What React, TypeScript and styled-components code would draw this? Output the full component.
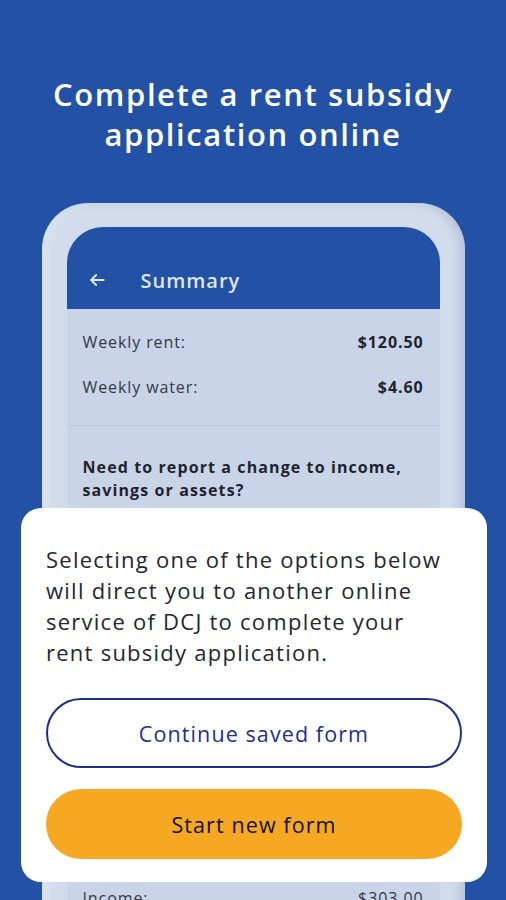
import { createGlobalStyle } from 'styled-components';
import styled from 'styled-components';

const GlobalStyle = createGlobalStyle`
  html, body {
    margin: 0;
    padding: 0;
    background: #2251a5;
  }
  body {
    font-family: 'Open Sans', 'Liberation Sans', sans-serif;
  }
`;

const Page = styled.div`
  position: relative;
  width: 506px;
  height: 900px;
  overflow: hidden;
  background: #2251a5;
  display: flex;
  flex-direction: column;
  align-items: center;
`;

const Heading = styled.h1`
  margin: 74px 0 0;
  color: #ffffff;
  font-size: 31px;
  font-weight: 600;
  line-height: 40px;
  text-align: center;
  letter-spacing: 1.6px;
  white-space: nowrap;
`;

const PhoneFrame = styled.div`
  margin-top: 49px;
  width: 423px;
  flex: 1;
  box-sizing: border-box;
  padding: 24px 25px 0;
  border-radius: 46px 46px 0 0;
  background: #d2dcec;
  box-shadow: inset -6px 0 8px rgba(150, 166, 196, 0.45), inset 6px 0 8px rgba(255, 255, 255, 0.25);
  display: flex;
  flex-direction: column;
`;

const Screen = styled.div`
  flex: 1;
  border-radius: 36px 36px 0 0;
  overflow: hidden;
  background: #c9d4e9;
  display: flex;
  flex-direction: column;
`;

const AppBar = styled.div`
  height: 82px;
  background: #2251a5;
  display: flex;
  align-items: center;
  padding: 24px 0 0 20px;
  box-sizing: border-box;
  gap: 34px;
  color: #dfe6f4;
`;

const BarTitle = styled.span`
  font-size: 20px;
  font-weight: 600;
  letter-spacing: 1px;
`;

const Section = styled.div<{ $divider?: boolean }>`
  padding: ${(p) => (p.$divider ? '30px 16px 0' : '10px 16px 16px')};
  border-bottom: ${(p) => (p.$divider ? 'none' : '1px solid #bcc8de')};
`;

const Row = styled.div`
  height: 45px;
  display: flex;
  align-items: center;
  justify-content: space-between;
  font-size: 16px;
  letter-spacing: 0.9px;
  color: #333a44;
`;

const Value = styled.span`
  font-weight: 700;
  color: #1e242c;
`;

const Question = styled.p`
  margin: 0;
  font-size: 16px;
  font-weight: 700;
  line-height: 23px;
  letter-spacing: 1.1px;
  color: #1e242c;
  white-space: nowrap;
`;

const BottomRow = styled(Row)`
  margin-top: 373px;
`;

const Sheet = styled.div`
  position: absolute;
  top: 508px;
  left: 21px;
  width: 466px;
  height: 374px;
  box-sizing: border-box;
  padding: 36px 25px 0;
  background: #ffffff;
  border-radius: 20px;
  display: flex;
  flex-direction: column;
`;

const SheetText = styled.p`
  margin: 0;
  max-width: 405px;
  font-size: 22px;
  line-height: 31px;
  color: #24272c;
  letter-spacing: 1.25px;
`;

const Button = styled.button<{ $primary?: boolean }>`
  height: 70px;
  border-radius: 35px;
  font-family: inherit;
  font-size: 21.5px;
  font-weight: 500;
  letter-spacing: 1.1px;
  cursor: pointer;
  border: ${(p) => (p.$primary ? 'none' : '2px solid #1d2f8e')};
  background: ${(p) => (p.$primary ? '#f6a823' : '#ffffff')};
  color: ${(p) => (p.$primary ? '#111111' : '#1d2f8e')};
  margin-top: ${(p) => (p.$primary ? '21px' : '30px')};
`;

function BackArrow() {
  return (
    <svg width='20' height='20' viewBox='0 0 24 24' fill='none' stroke='#dfe6f4' strokeWidth='2.4' strokeLinecap='round' strokeLinejoin='round'>
      <path d='M20 12H5' />
      <path d='M11 6l-6 6 6 6' />
    </svg>
  );
}

export default function App() {
  return (
    <>
      <GlobalStyle />
      <Page>
        <Heading>
          Complete a rent subsidy
          <br />
          application online
        </Heading>
        <PhoneFrame>
          <Screen>
            <AppBar>
              <BackArrow />
              <BarTitle>Summary</BarTitle>
            </AppBar>
            <Section>
              <Row>
                <span>Weekly rent:</span>
                <Value>$120.50</Value>
              </Row>
              <Row>
                <span>Weekly water:</span>
                <Value>$4.60</Value>
              </Row>
            </Section>
            <Section $divider>
              <Question>
                Need to report a change to income,
                <br />
                savings or assets?
              </Question>
              <BottomRow>
                <span>Income:</span>
                <span>$303.00</span>
              </BottomRow>
            </Section>
          </Screen>
        </PhoneFrame>
        <Sheet>
          <SheetText>
            Selecting one of the options below will direct you to another online service of DCJ to complete your rent subsidy application.
          </SheetText>
          <Button>Continue saved form</Button>
          <Button $primary>Start new form</Button>
        </Sheet>
      </Page>
    </>
  );
}
